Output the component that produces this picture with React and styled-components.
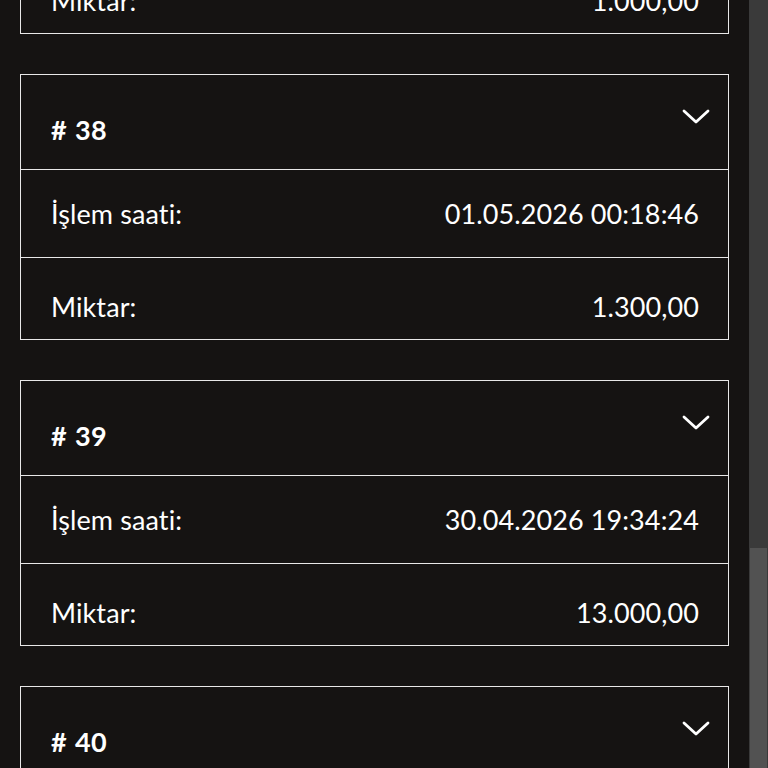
import React from "react";
import styled, { createGlobalStyle } from "styled-components";

const GlobalStyle = createGlobalStyle`
  html, body {
    margin: 0;
    padding: 0;
    background: #151312;
  }
  body {
    font-family: Lato, "Noto Sans", sans-serif;
    color: #ffffff;
  }
`;

const Page = styled.div`
  display: flex;
  height: 768px;
  overflow: hidden;
  background: #151312;
`;

const Content = styled.div`
  flex: 1;
  overflow: hidden;
`;

const List = styled.div`
  display: flex;
  flex-direction: column;
  gap: 40px;
  padding: 0 20px;
  margin-top: -232px;
`;

const Card = styled.div`
  border: 1px solid #e8e8e8;
  display: flex;
  flex-direction: column;
`;

const Header = styled.div`
  height: 95px;
  box-sizing: border-box;
  display: flex;
  justify-content: space-between;
  padding: 0 17px 0 30px;
  border-bottom: 1px solid #e8e8e8;
  .title {
    font-size: 27px;
    font-weight: 700;
    padding-top: 38px;
    letter-spacing: 0.4px;
    word-spacing: 1px;
  }
  svg {
    margin-top: 33px;
  }
`;

const Row = styled.div`
  display: flex;
  justify-content: space-between;
  box-sizing: border-box;
  height: ${(p) => p.h}px;
  padding: ${(p) => p.pt}px 29px 0 30px;
  font-size: 27px;
  letter-spacing: 0.1px;
  border-bottom: ${(p) => (p.last ? "none" : "1px solid #e8e8e8")};
`;

const Scrollbar = styled.div`
  width: 19px;
  background: #3a3a3a;
  display: flex;
  flex-direction: column;
  padding-top: 548px;
  box-sizing: border-box;
`;

const Thumb = styled.div`
  flex: 1;
  background: #525252;
  margin: 0 1px;
`;

const Chevron = () => (
  <svg width="30" height="18" viewBox="0 0 30 18" fill="none">
    <path d="M3 3 L15 14 L27 3" stroke="#fff" strokeWidth="2.8" strokeLinecap="round" strokeLinejoin="round" />
  </svg>
);

const items = [
  { id: 37, time: "01.05.2026 00:20:12", amount: "1.000,00" },
  { id: 38, time: "01.05.2026 00:18:46", amount: "1.300,00" },
  { id: 39, time: "30.04.2026 19:34:24", amount: "13.000,00" },
  { id: 40, time: "30.04.2026 18:02:10", amount: "5.000,00" },
];

export default function App() {
  return (
    <>
      <GlobalStyle />
      <Page>
        <Content>
          <List>
            {items.map((it) => (
              <Card key={it.id}>
                <Header>
                  <span className="title"># {it.id}</span>
                  <Chevron />
                </Header>
                <Row h={88} pt={27}>
                  <span>İşlem saati:</span>
                  <span>{it.time}</span>
                </Row>
                <Row h={81} pt={32} last>
                  <span>Miktar:</span>
                  <span>{it.amount}</span>
                </Row>
              </Card>
            ))}
          </List>
        </Content>
        <Scrollbar>
          <Thumb />
        </Scrollbar>
      </Page>
    </>
  );
}
